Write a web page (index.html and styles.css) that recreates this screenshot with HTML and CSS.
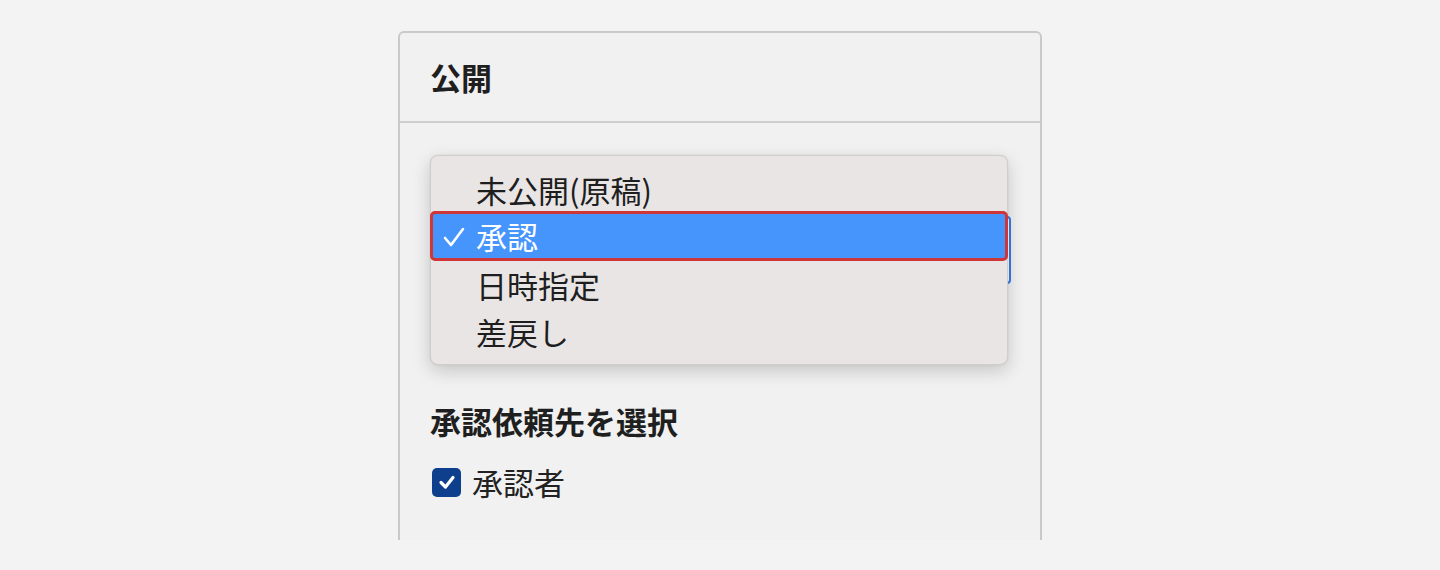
FILE: index.html
```html
<!DOCTYPE html>
<html lang="ja">
<head>
<meta charset="utf-8">
<title>公開</title>
<link rel="stylesheet" href="styles.css">
</head>
<body>
<div class="stage">
  <section class="card">
    <header class="card-head"><h2 class="card-title">公開</h2></header>
    <div class="card-body">
      <div class="select-wrap">
        <div class="select-box"></div>
        <ul class="menu">
          <li class="menu-item">未公開(原稿)</li>
          <li class="menu-item selected">
            <svg class="tick" viewBox="0 0 22 22" width="22" height="22"><polyline points="2,12 8,19 20,3" fill="none" stroke="#fff" stroke-width="2.6" stroke-linecap="round" stroke-linejoin="round"/></svg>
            承認
          </li>
          <li class="menu-item">日時指定</li>
          <li class="menu-item">差戻し</li>
        </ul>
      </div>
      <h3 class="section-title">承認依頼先を選択</h3>
      <label class="check-row">
        <span class="checkbox"><svg viewBox="0 0 28 28" width="28" height="28"><polyline points="8,14.5 12.5,19 20,9.5" fill="none" stroke="#fff" stroke-width="3.2" stroke-linecap="round" stroke-linejoin="round"/></svg></span>
        <span class="check-label">承認者</span>
      </label>
    </div>
  </section>
</div>
</body>
</html>
```

FILE: styles.css
```css
* { box-sizing: border-box; }
html, body { margin: 0; padding: 0; }
body {
  background: #f3f3f3;
  font-family: "Noto Sans CJK JP", "Noto Sans", sans-serif;
  color: #222;
  height: 570px;
  overflow: hidden;
}
.stage {
  height: 540px;
  overflow: hidden;
  display: flex;
  justify-content: center;
  padding-top: 31px;
}
.card {
  width: 644px;
  height: 700px;
  background: #f1f1f1;
  border: 2px solid #c9c9c9;
  border-radius: 6px;
}
.card-head {
  height: 90px;
  border-bottom: 2px solid #cdcdcd;
  display: flex;
  align-items: center;
  padding: 0 30px;
}
.card-title {
  margin: 0;
  font-size: 31px;
  font-weight: 700;
  line-height: 40px;
  color: #1f1f1f;
}
.card-body {
  padding: 93px 29px 0 30px;
}
.select-wrap {
  position: relative;
  height: 68px;
}
.select-box {
  height: 68px;
  border: 2px solid #3a7be8;
  border-radius: 4px;
  background: #ffffff;
}
.menu {
  position: absolute;
  left: 0;
  top: -61px;
  width: 578px;
  margin: 0;
  padding: 10px 0 9px;
  list-style: none;
  background: #e9e5e5;
  border: 1px solid #d2cdcd;
  border-radius: 8px;
  box-shadow: 0 6px 18px rgba(0, 0, 0, 0.18), 0 0 2px rgba(0, 0, 0, 0.1);
}
.menu-item {
  height: 47px;
  line-height: 47px;
  padding-left: 45px;
  font-size: 31px;
  color: #1e1e1e;
  position: relative;
}
.menu-item.selected {
  height: 50px;
  line-height: 44px;
  margin: -2px -1px 0;
  background: #4595fd;
  border: 3px solid #cf3638;
  border-radius: 5px;
  color: #fff;
  padding-left: 43px;
}
.tick {
  position: absolute;
  left: 10px;
  top: 12px;
}
.section-title {
  margin: 117px 0 0;
  font-size: 31px;
  font-weight: 700;
  line-height: 40px;
  color: #1f1f1f;
}
.check-row {
  margin-top: 21px;
  height: 40px;
  display: flex;
  align-items: center;
  gap: 11px;
  padding-left: 2px;
}
.checkbox {
  width: 29px;
  height: 29px;
  border-radius: 5px;
  background: #0d3f8c;
  display: flex;
  align-items: center;
  justify-content: center;
}
.checkbox svg { display: block; }
.check-label {
  font-size: 31px;
  line-height: 40px;
  color: #222;
}
```
